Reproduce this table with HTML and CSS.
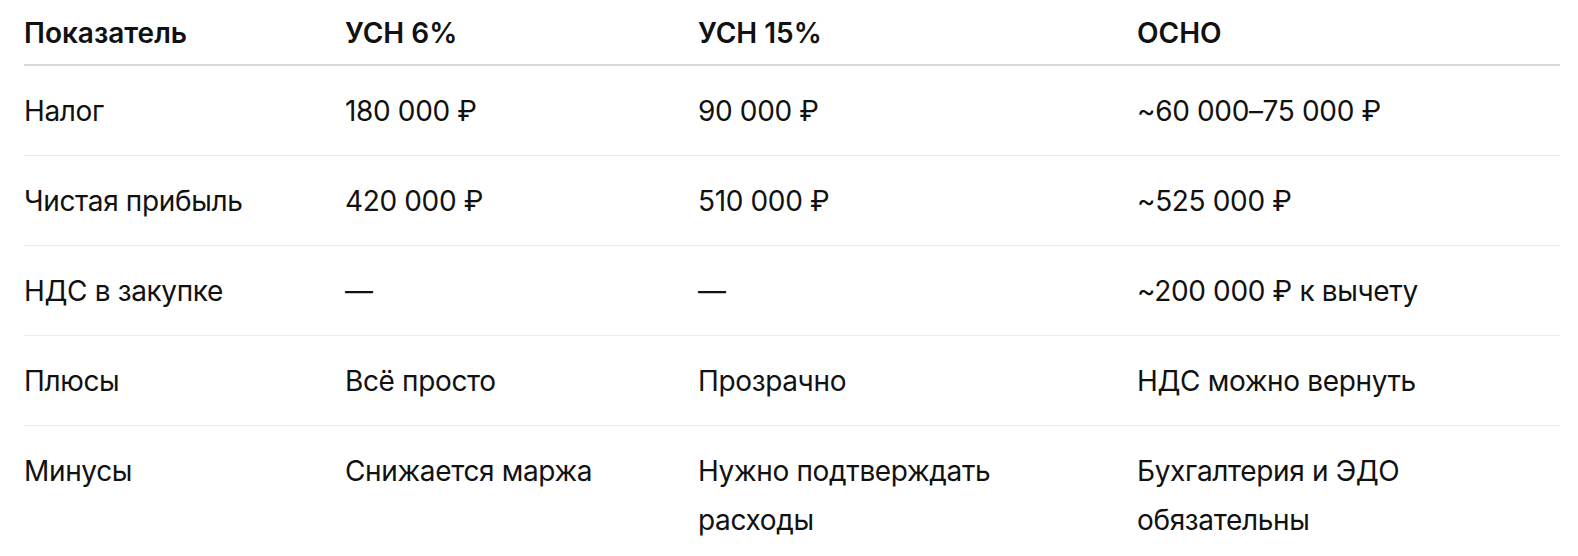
FILE: index.html
```html
<!DOCTYPE html>
<html lang="ru">
<head>
<meta charset="utf-8">
<link rel="stylesheet" href="styles.css">
</head>
<body>
<table class="cmp">
  <colgroup>
    <col class="c1"><col class="c2"><col class="c3"><col class="c4">
  </colgroup>
  <thead>
    <tr><th>Показатель</th><th>УСН 6%</th><th>УСН 15%</th><th>ОСНО</th></tr>
  </thead>
  <tbody>
    <tr><td>Налог</td><td>180 000 ₽</td><td>90 000 ₽</td><td>~60 000–75 000 ₽</td></tr>
    <tr><td>Чистая прибыль</td><td>420 000 ₽</td><td>510 000 ₽</td><td>~525 000 ₽</td></tr>
    <tr><td>НДС в закупке</td><td>—</td><td>—</td><td>~200 000 ₽ к вычету</td></tr>
    <tr><td>Плюсы</td><td>Всё просто</td><td>Прозрачно</td><td>НДС можно вернуть</td></tr>
    <tr><td>Минусы</td><td>Снижается маржа</td><td>Нужно подтверждать расходы</td><td>Бухгалтерия и ЭДО обязательны</td></tr>
  </tbody>
</table>
</body>
</html>
```

FILE: styles.css
```css
html, body {
  margin: 0;
  padding: 0;
  background: #ffffff;
}
body {
  padding: 0 18px 0 24px;
  font-family: Inter, "Liberation Sans", sans-serif;
  color: #111111;
}
.cmp {
  width: 1536px;
  border-collapse: collapse;
  table-layout: fixed;
  font-size: 28px;
  line-height: 49px;
}
.c1 { width: 321px; }
.c2 { width: 353px; }
.c3 { width: 439px; }
.c4 { width: 423px; }
.cmp th {
  text-align: left;
  font-weight: 600;
  padding: 9px 16px 6px 0;
  border-bottom: 2px solid #d9d9d9;
}
.cmp td {
  padding: 21px 48px 19px 0;
  vertical-align: top;
  border-bottom: 1px solid #ececec;
  font-weight: 400;
  letter-spacing: -0.35px;
}
```
